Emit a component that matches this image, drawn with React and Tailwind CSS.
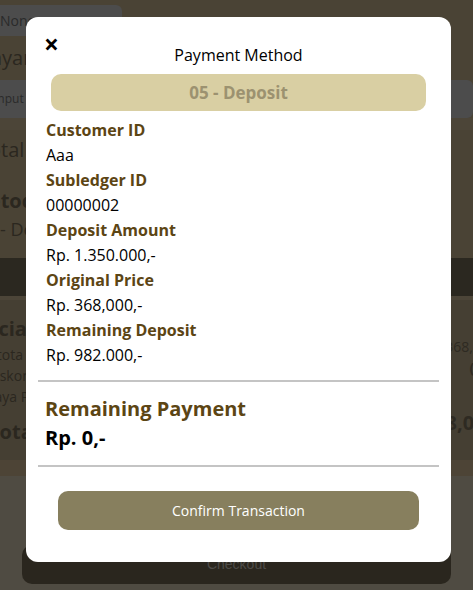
import React from "react";

const rows = [
  ["Customer ID", "Aaa"],
  ["Subledger ID", "00000002"],
  ["Deposit Amount", "Rp. 1.350.000,-"],
  ["Original Price", "Rp. 368,000,-"],
  ["Remaining Deposit", "Rp. 982.000,-"],
];

const Background = () => (
  <div className="min-h-[590px] bg-[#4f4b42] text-[#2b271f] overflow-hidden">
    <div className="bg-[#4a4335] pt-[5px]">
      <div className="w-[122px] h-[31px] bg-[#4c4c4c] rounded-r-md flex items-center text-[14px] text-[#2a2a2a]">
        None
      </div>
      <div className="h-[44px] flex items-center -ml-[22px] text-[20px]">Bayar</div>
      <div className="h-[38px] bg-[#4c4c4c] flex items-center -ml-[6px] text-[12px] text-[#2a2a2a] rounded-md">
        Input
      </div>
      <div className="h-[12px] bg-[#4c4538]" />
      <div className="h-[40px] flex items-center -ml-[22px] text-[20px]">Total P</div>
      <div className="h-[88px] flex flex-col justify-center -ml-[30px]">
        <div className="text-[20px] font-bold">Metode</div>
        <div className="text-[18px] ml-[30px]">- Deposit</div>
      </div>
      <div className="h-[38px] bg-[#2b2820]" />
      <div className="h-[4px] bg-[#4c4538]" />
      <div className="h-[160px] bg-[#453f33] flex justify-between pt-[14px]">
        <div className="-ml-[34px] flex flex-col">
          <div className="text-[20px] font-bold">Rincian</div>
          <div className="text-[14px] ml-[6px]">Subtota</div>
          <div className="text-[14px] ml-[20px]">Diskon</div>
          <div className="text-[14px] ml-[16px]">Biaya Pe</div>
          <div className="text-[20px] font-bold mt-[10px] ml-[22px]">Total P</div>
        </div>
        <div className="flex flex-col items-end -mr-[24px] pt-[22px] text-[#2e2a22]">
          <div className="text-[14px]">368,000</div>
          <div className="text-[14px] font-bold">(Rp)</div>
          <div className="text-[20px] font-bold mt-[30px]">368,000</div>
        </div>
      </div>
      <div className="h-[16px] bg-[#4d4436]" />
    </div>
    <div className="px-[22px] pt-[69px]">
      <div className="h-[39px] rounded-[10px] bg-[#2a261e] flex items-center justify-center text-[14px] text-[#4d4b48] font-['Liberation_Sans',sans-serif]">
        Checkout
      </div>
    </div>
  </div>
);

export default function App() {
  return (
    <div className="relative font-['Open_Sans',sans-serif]">
      <Background />
      <div className="absolute left-[26px] top-[17px] w-[425px] h-[545px] bg-white rounded-[12px] flex flex-col">
        <div className="relative pt-[28px] px-[20px]">
          <button className="absolute left-[18px] top-[14px] text-[26px] font-bold leading-none text-black">
            ×
          </button>
          <h2 className="text-center text-[16px] text-black leading-[20px]">Payment Method</h2>
          <div className="mt-[9px] mx-[5px] h-[37px] rounded-[10px] bg-[#d9cfa3] flex items-center justify-center text-[17px] font-bold text-[#9c9270]">
            05 - Deposit
          </div>
          <div className="mt-[6px] flex flex-col">
            {rows.map(([label, value]) => (
              <React.Fragment key={label}>
                <div className="h-[25px] flex items-center text-[16px] font-bold text-[#5c4514]">{label}</div>
                <div className="h-[25px] flex items-center text-[16px] text-black">{value}</div>
              </React.Fragment>
            ))}
          </div>
        </div>
        <div className="mx-[12px] mt-[13px] border-t-2 border-[#c4c4c4]" />
        <div className="px-[19px] pt-[13px]">
          <div className="text-[20px] font-bold text-[#5c4514] leading-[28px]">Remaining Payment</div>
          <div className="text-[20px] font-bold text-black leading-[29px]">Rp. 0,-</div>
        </div>
        <div className="mx-[12px] mt-[13px] border-t-2 border-[#c4c4c4]" />
        <div className="px-[32px] pt-[24px]">
          <button className="w-full h-[39px] rounded-[10px] bg-[#877f5e] text-white text-[14px] font-medium">
            Confirm Transaction
          </button>
        </div>
      </div>
    </div>
  );
}
